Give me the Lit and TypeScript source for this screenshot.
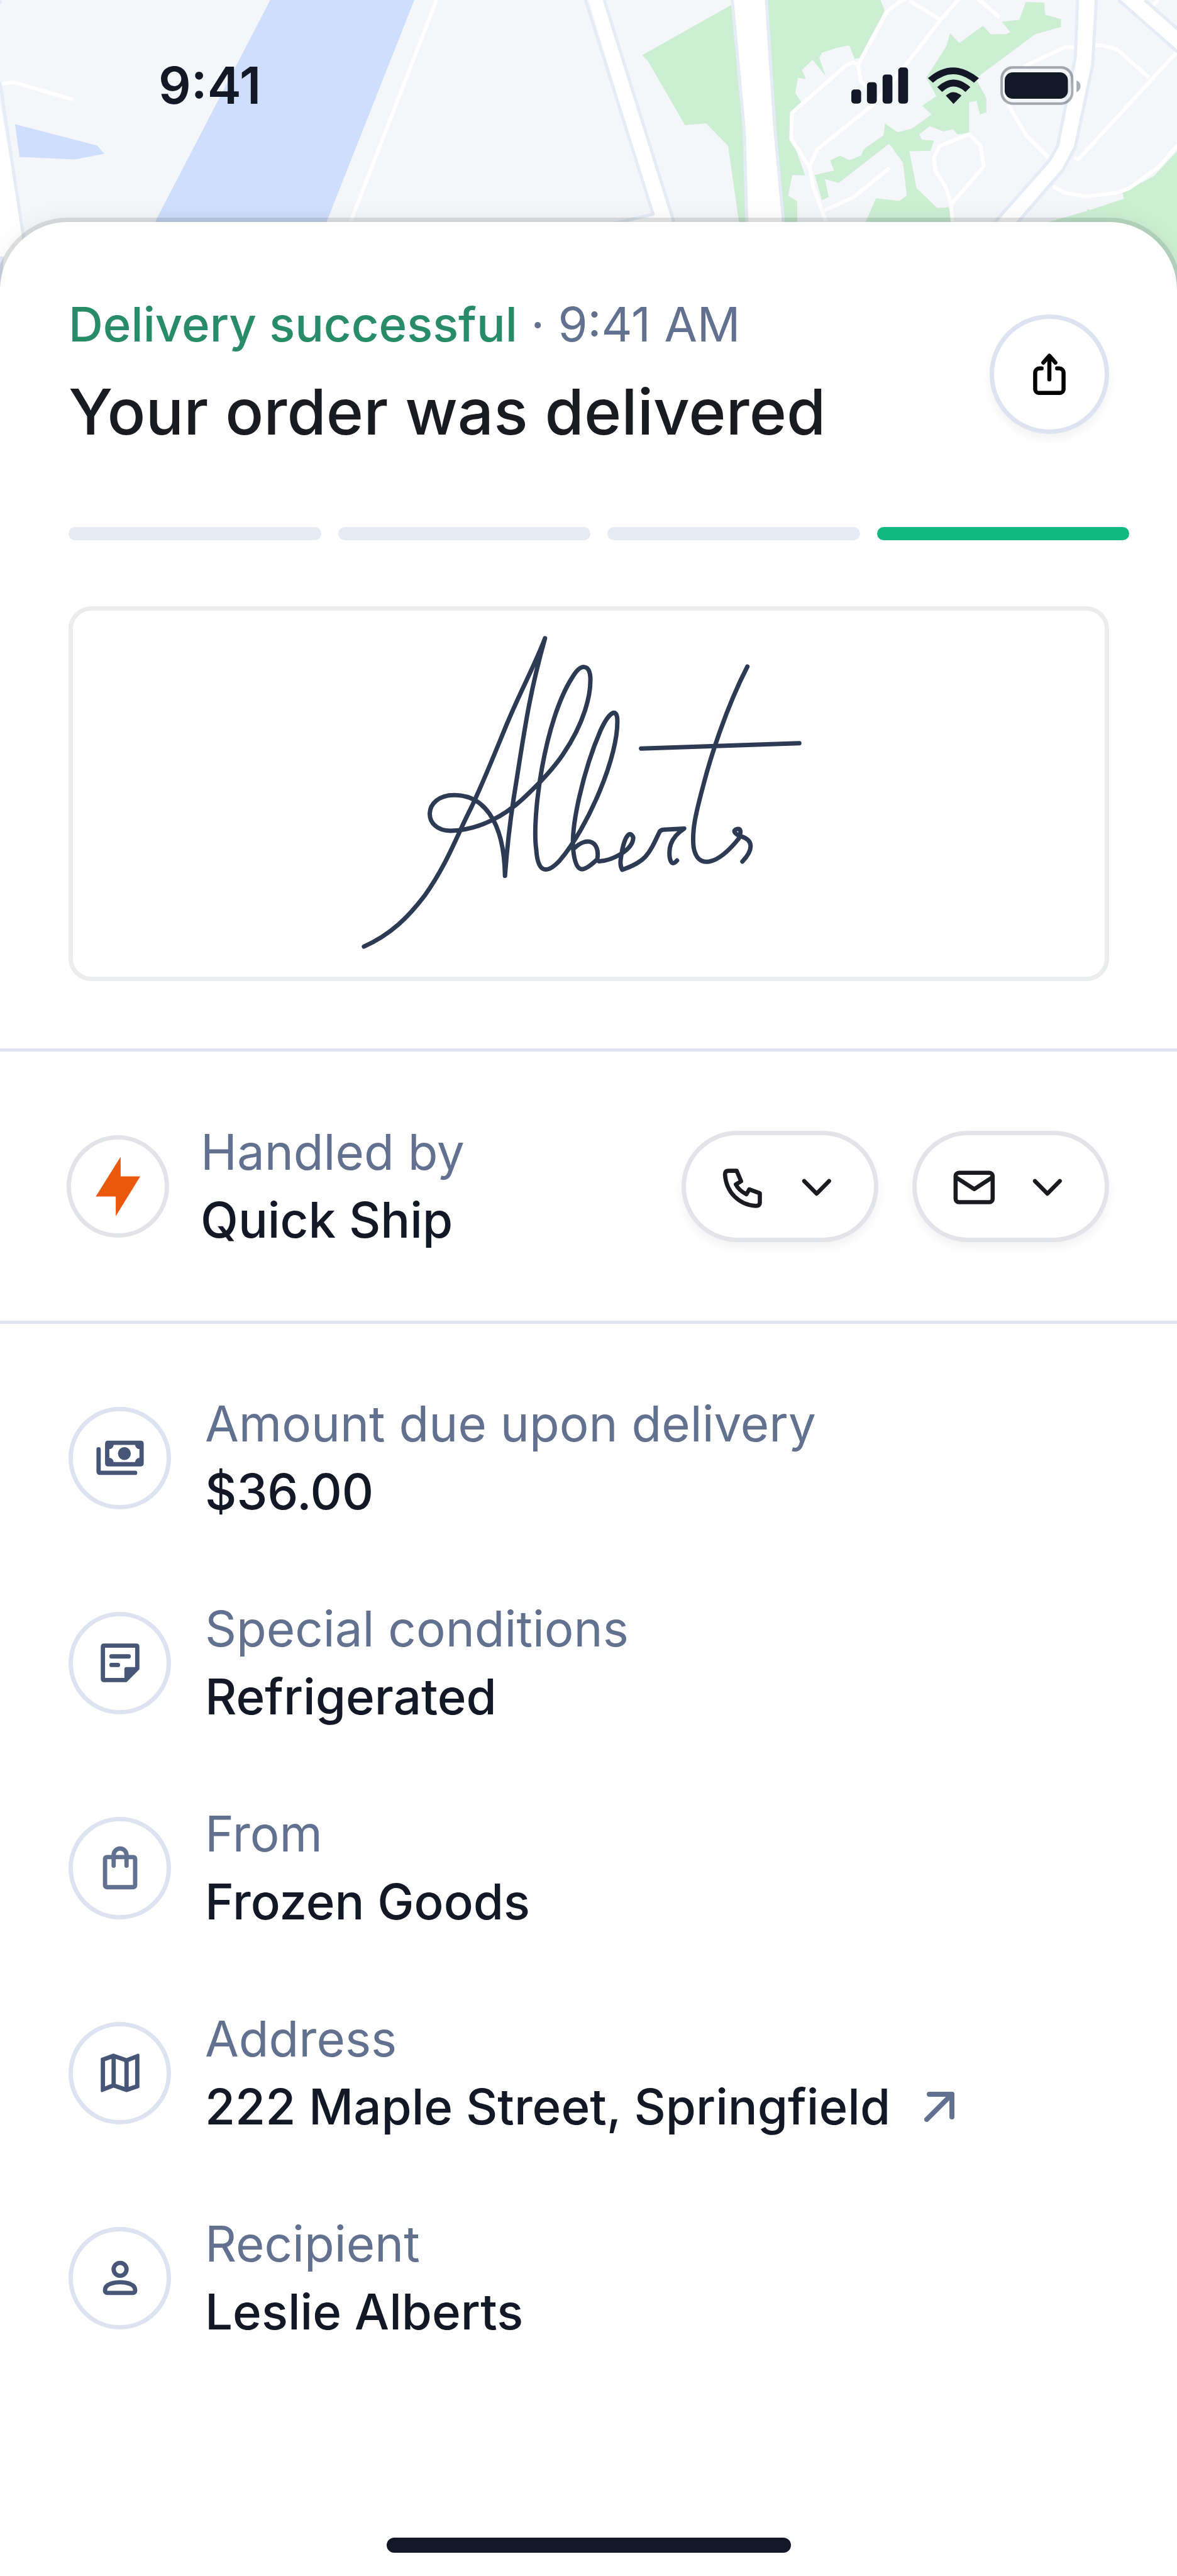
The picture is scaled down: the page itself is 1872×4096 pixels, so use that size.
import { LitElement, html, svg, css, type TemplateResult } from "lit";
import { customElement, property } from "lit/decorators.js";

/* ---------- Icons, on a 24 unit grid ---------- */

const stroked = (body: TemplateResult, width = 2) => svg`
  <g fill="none" stroke="currentColor" stroke-width=${width} stroke-linecap="round" stroke-linejoin="round">${body}</g>`;

const icons: Record<string, TemplateResult> = {
  share: stroked(
    svg`<path d="M8.4 9.3H7.4a2 2 0 0 0-2 2V19a1.7 1.7 0 0 0 1.7 1.7h9.8a1.7 1.7 0 0 0 1.7-1.7V11.3a2 2 0 0 0-2-2h-1"/>
        <path d="M12 14.4V3.5M9.2 6.6 12 3.4l2.8 3.2"/>`,
    1.9,
  ),
  phone: stroked(
    svg`<path stroke-linejoin="round" d="M3.05 6.2Q3.05 4.45 4.85 4.45H8.7L10.85 9.5 8.3 11.05Q9.8 14 13.45 15.8L14.8 13.4 19.9 15.3V20Q19.8 21.4 18 21.4C10 21 3.7 15 3.05 6.2Z"/>`,
  ),
  mail: stroked(
    svg`<rect x="3" y="5.4" width="17.9" height="14.2" rx="1.6"/><path d="M3.6 7.9 12 13.3l8.3-5.4"/>`,
  ),
  chevron: stroked(svg`<path d="M6.1 9.4 12.1 15.5 18.1 9.4"/>`),
  money: svg`<g fill="currentColor">
    <path fill-rule="evenodd" d="M6.4 4H21.6Q23 4 23 5.5V14.5Q23 16 21.6 16H6.4Q5 16 5 14.5V5.5Q5 4 6.4 4ZM9 6A2.1 2.1 0 0 1 7 8V12A2.1 2.1 0 0 1 9 14H19A2.1 2.1 0 0 1 21 12V8A2.1 2.1 0 0 1 19 6Z"/>
    <circle cx="14" cy="10" r="3"/>
    <path d="M1 8A1 1 0 0 1 3 8V18H19A1 1 0 0 1 19 20H2.6Q1 20 1 18.4Z"/></g>`,
  note: svg`<g fill="currentColor">
    <path fill-rule="evenodd" d="M4.6 3H19.4Q21 3 21 4.6V15L15 21H4.6Q3 21 3 19.4V4.6Q3 3 4.6 3ZM5 5V19H14V15Q14 14 15 14H19V5Z"/>
    <rect x="7" y="8" width="10" height="2" rx="1"/><rect x="7" y="12" width="5" height="2" rx="1"/></g>`,
  bag: stroked(
    svg`<rect x="5" y="7" width="14" height="14" rx=".8"/><path d="M9 11V6a3 3 0 0 1 6 0v5"/>`,
  ),
  map: svg`<path fill="currentColor" fill-rule="evenodd" d="M3.4 5 8.9 3 15 5.1 20.3 3.1Q21 2.9 21 3.6V18.6Q21 19 20.6 19.1L15 21 9 18.9 3.7 20.9Q3 21.1 3 20.4V5.4Q3 5.1 3.4 5ZM5 6.5V18.3L8 17.1V5.5ZM10 5.5V17.1L14 18.5V6.9ZM16 6.9V18.5L19 17.5V5.7Z"/>`,
  person: stroked(
    svg`<circle cx="12" cy="8" r="3"/><path d="M5 17.6C5 14.8 9.4 14 12 14s7 .8 7 3.6V18a1 1 0 0 1-1 1H6a1 1 0 0 1-1-1Z"/>`,
  ),
};

@customElement("ui-icon")
export class UiIcon extends LitElement {
  @property() name = "";

  static styles = css`
    :host {
      display: block;
      width: var(--icon-size, 82px);
      height: var(--icon-size, 82px);
    }
    .glyph {
      display: block;
      width: 100%;
      height: 100%;
    }
  `;

  render() {
    return html`<svg class="glyph" viewBox="0 0 24 24" aria-hidden="true">${icons[this.name]}</svg>`;
  }
}

/* ---------- Map behind the sheet ---------- */

@customElement("city-map")
export class CityMap extends LitElement {
  static styles = css`
    :host {
      display: block;
    }
    .map {
      display: block;
      width: 100%;
      background: #f4f6fa;
    }
    .water {
      fill: #cfdefd;
    }
    .shore {
      fill: #e3e9f6;
    }
    .park {
      fill: #cceed3;
    }
    .road {
      fill: #ffffff;
    }
    .edge,
    .lane {
      fill: none;
      stroke-linejoin: round;
      vector-effect: non-scaling-stroke;
    }
    .edge {
      stroke: #e6ecf5;
      stroke-width: 5px;
    }
    .lane {
      stroke: #ffffff;
      stroke-width: 6px;
    }
  `;

  render() {
    return html`
      <svg class="map" viewBox="0 0 1920 480" aria-hidden="true">
        <g transform="scale(.61224 .33333)">
          <path class="road" d="M0 500 62 1165V1440H0Z" />
          <path class="edge" d="M0 400 32 790 66 1200" />
          <path class="edge" d="M0 0V20" />
          <path class="lane" d="M4 410 36 402 195 488" />
          <path class="water" d="M40 608 259 712 278 752 200 780 52 768Z" />
          <path class="water" d="M720 0H1104L870 1086 800 1440H315L413 1086Z" />
          <path class="lane" d="M1163 0 933 1090" />
          <path class="shore" d="M0 1255H10L4 1400H0Z" />
        </g>
        <g transform="translate(960 0) scale(.61224 .33333)">
          <path class="road" d="M0 0H42L230 1100H65L172 1048Z" />
          <path class="edge" d="M-8 0 172 1048 60 1096M42 0 230 1100" />
          <path class="park" d="M380 25 143 270 158 298 257 612 313 603 372 714 402 1100H440L430 600Z" />
          <path
            class="park"
            d="M478 0H778L789 52 722 284 709 288 695 222 662 234 622 258 615 284 632 372 597 292 569 342 579 388 558 380 551 455 567 500 542 552 538 612 544 688 577 858 543 856 532 958 556 984V1100H510L498 640 484 290Z"
          />
          <path
            class="park"
            d="M1165 10 1214 12 1217 72 1259 94V132L1190 168 1040 372 1032 385 1060 480V550L1043 560 1034 494 1014 500V648L983 658 971 632 946 643 909 617 881 658 888 684 921 688 911 738 855 740 874 920 929 1018 960 1014 970 1100H735L766 970 828 983 848 958 838 796 801 703 667 895 630 877 640 964 622 980 603 856 654 835 644 784 671 762 696 784 727 760 733 730 786 662 790 604 823 647 861 630 914 560 889 518 927 470 900 380 954 225 963 162 988 210 1051 126 1072 168 1115 166 1124 156 1101 106 1148 97Z"
          />
          <path class="park" d="M1568 740 1507 860 1423 945 1427 972 1336 1028 1330 1022 1328 1032 1227 1086 1300 1440H1568Z" />
          <path class="lane" d="M845 -5 830 8 796 55 718 318 726 400 745 430M855 3 938 98M987 -5 938 98 845 318 760 510 610 730 590 810" />
          <path class="lane" d="M718 318 706 305 688 318 542 552 540 680 590 820 598 910 635 1095M1038 -5 1095 85M628 1030 706 965 802 822" />
          <path class="lane" d="M970 1090 966 1000 952 917 924 835 920 774 936 714 1014 657 1045 714 1053 815 966 1000" />
          <path class="lane" d="M1160 325 1271 230H1297M1350 222H1370L1409 243 1494 380M1570 250 1305 780 1295 772M1517 0 1505 25" />
          <path class="lane" d="M1110 450 1118 510 1165 660 1225 770M1238 912 1268 942 1327 962 1405 944 1440 922 1520 815 1570 710" />
          <path class="road" d="M383 0H474L484 290 497 640 520 1100H422L415 640Z" />
          <path class="edge" d="M383 0 415 640 422 1100M474 0 484 290 497 640 520 1100" />
          <path class="road" d="M1303 0H1353L1343 320 1297 720 1265 830 1138 1100H1076L1228 785 1250 714 1297 280Z" />
          <path class="edge" d="M1303 0 1297 280 1250 714 1228 785 1076 1100M1353 0 1343 320 1297 720 1265 830 1138 1100" />
          <path class="road" d="M1412 0H1482L1568 140V250Z" />
          <path class="edge" d="M1412 0 1570 255M1482 0 1570 142" />
        </g>
      </svg>
    `;
  }
}

/* ---------- Customer's signature ---------- */

@customElement("signature-mark")
export class SignatureMark extends LitElement {
  static styles = css`
    :host {
      display: block;
      width: 780px;
      max-width: 100%;
    }
    .ink {
      display: block;
      width: 100%;
      fill: none;
      stroke: #2d3a54;
      stroke-width: 7px;
      stroke-linecap: round;
      stroke-linejoin: round;
      overflow: visible;
    }
  `;

  render() {
    return html`
      <svg class="ink" viewBox="0 0 800 585" role="img" aria-label="Signature of Leslie Alberts">
        <g transform="scale(.5102 .3954) translate(0 -60)">
          <path
            vector-effect="non-scaling-stroke"
            d="M64 1430C150 1380 205 1310 258 1220C330 1090 360 975 405 862C440 770 480 640 520 515C565 375 610 270 643 158C590 400 575 560 545 800C530 920 520 1050 515 1138C512 900 440 805 353 805C250 805 250 955 343 952C430 950 515 890 575 817C620 763 665 705 700 638C770 505 790 390 788 320C785 270 760 255 730 320C640 500 600 900 615 1030C620 1130 650 1130 690 1075C780 940 880 640 874 490C872 450 850 455 820 540C770 690 720 940 735 1050C745 1130 765 1125 810 1070C820 1000 780 970 736 1025"
          />
          <path
            vector-effect="non-scaling-stroke"
            d="M816 1078C860 1075 925 1030 925 980C915 950 900 970 890 1030C885 1070 880 1090 890 1113C965 1080 975 1050 1008 960Q1012 948 1022 948L1088 943C1040 985 1038 1030 1042 1065C1047 1092 1055 1090 1065 1075"
          />
          <path
            vector-effect="non-scaling-stroke"
            d="M1290 275C1220 450 1170 660 1150 760C1125 880 1112 950 1118 1020C1130 1110 1190 1100 1262 985C1272 955 1268 943 1258 945C1240 950 1250 965 1268 975C1310 990 1310 1030 1274 1079"
          />
          <path vector-effect="non-scaling-stroke" d="M950 613 1456 591" />
        </g>
      </svg>
    `;
  }
}

/* ---------- Page ---------- */

interface Detail {
  icon: string;
  label: string;
  value: string;
  light?: boolean;
  link?: boolean;
}

const details: Detail[] = [
  { icon: "money", label: "Amount due upon delivery", value: "$36.00" },
  { icon: "note", label: "Special conditions", value: "Refrigerated" },
  { icon: "bag", label: "From", value: "Frozen Goods", light: true },
  { icon: "map", label: "Address", value: "222 Maple Street, Springfield", link: true },
  { icon: "person", label: "Recipient", value: "Leslie Alberts" },
];

const contacts = [
  { icon: "phone", label: "Call the courier" },
  { icon: "mail", label: "Message the courier" },
];

const steps = [false, false, false, true];

@customElement("app-root")
export class AppRoot extends LitElement {
  static styles = css`
    :host {
      display: flex;
      flex-direction: column;
      min-height: 100vh;
      background: #ffffff;
      color: #121826;
      font-family: Inter, "Liberation Sans", sans-serif;
      font-size: 78px;
      line-height: 108px;
    }
    * {
      box-sizing: border-box;
    }
    h1,
    p,
    dl,
    dt,
    dd {
      margin: 0;
      font: inherit;
    }
    button {
      font: inherit;
      color: inherit;
      background: #ffffff;
      cursor: pointer;
    }

    .hero {
      display: grid;
    }
    .hero > * {
      grid-area: 1 / 1;
      min-width: 0;
    }
    .status {
      display: flex;
      align-items: center;
      justify-content: space-between;
      align-self: start;
      height: 272px;
      padding: 0 153px 0 252px;
      font-size: 81px;
      font-weight: 600;
    }
    .indicators {
      display: block;
      width: 365px;
      height: 62px;
    }

    .sheet {
      position: relative;
      display: flex;
      flex-direction: column;
      flex: 1;
      margin-top: -115px;
      border-radius: 108px 108px 0 0;
      background: #ffffff;
      box-shadow:
        0 0 0 7px rgba(20, 30, 30, 0.12),
        0 0 40px rgba(20, 30, 30, 0.08);
    }

    .header {
      display: flex;
      align-items: center;
      justify-content: space-between;
      padding: 108px 108px 0 109px;
    }
    .headline {
      display: grid;
      gap: 10px;
    }
    .state {
      color: #62718f;
      font-size: 76px;
    }
    .ok {
      color: #288c68;
      font-weight: 500;
    }
    .title {
      color: #191b21;
      font-size: 101px;
      font-weight: 500;
      line-height: 150px;
    }
    .share {
      display: grid;
      place-items: center;
      width: 190px;
      height: 190px;
      padding: 0;
      border: 7px solid #dde3f0;
      border-radius: 50%;
      color: #000000;
      box-shadow: 0 8px 14px rgba(0, 0, 0, 0.05);
    }

    .progress {
      display: grid;
      grid-template-columns: repeat(4, 1fr);
      gap: 27px;
      margin: 109px 76px 0 109px;
    }
    .step {
      height: 21px;
      border-radius: 11px;
      background: #e6eaf4;
    }
    .step.current {
      background: #11b981;
    }

    .signature {
      display: grid;
      justify-items: center;
      margin: 105px 108px 107px 109px;
      padding: 6px 0;
      border: 7px solid #ebeced;
      border-radius: 36px;
    }

    .courier {
      display: flex;
      align-items: center;
      padding: 106px 108px 106px 106px;
      border: 0 solid #dde3f0;
      border-width: 5px 0;
    }
    .badge {
      display: grid;
      flex: none;
      place-items: center;
      width: 163px;
      height: 163px;
      border: 7px solid #dde3f0;
      border-radius: 50%;
      color: #475676;
    }
    .badge.brand {
      border-color: #e3e4e9;
    }
    .badge.light {
      color: #62718f;
    }
    .bolt {
      display: block;
      width: 149px;
      height: 149px;
    }
    .pair {
      flex: 1;
      margin-left: 50px;
    }
    .label {
      color: #62718f;
    }
    .value {
      display: flex;
      align-items: center;
      gap: 54px;
      font-weight: 500;
    }

    .contacts {
      display: flex;
      gap: 54px;
    }
    .contact {
      --icon-size: 79px;
      display: flex;
      align-items: center;
      gap: 37px;
      height: 177px;
      padding: 0 52px;
      border: 7px solid #e3e4e9;
      border-radius: 89px;
      color: #191b21;
      box-shadow: 0 8px 14px rgba(0, 0, 0, 0.05);
    }

    .details {
      display: grid;
      gap: 110px;
      padding: 105px 108px 100px 109px;
    }
    .detail {
      display: flex;
      align-items: center;
    }
    .detail .pair {
      margin-left: 54px;
    }
    .open {
      color: #62718f;
    }
    .arrow {
      display: block;
      width: 48px;
      height: 48px;
    }

    .home {
      align-self: center;
      width: 643px;
      height: 24px;
      margin: auto 0 37px;
      border-radius: 12px;
      background: #121826;
    }
  `;

  private statusBar() {
    return html`
      <div class="status">
        <time>9:41</time>
        <svg class="indicators" viewBox="0 0 374 63" role="img" aria-label="Signal, Wi-Fi and battery">
          <g fill="#121826">
            <rect x="0" y="38" width="16" height="23" rx="5" />
            <rect x="25.5" y="26" width="16" height="35" rx="5" />
            <rect x="51" y="13.5" width="16" height="47.5" rx="5" />
            <rect x="76.5" y="2" width="16" height="59" rx="5" />
            <path d="M125 19.5Q165 -15.5 208 19.5L200 27Q165 -1 133 27Z" />
            <path d="M140 34Q166 9.5 194 34L186 42Q166 24 148 42Z" />
            <path d="M154 48Q166 36.5 179.5 48L166.5 61.5Z" />
            <rect x="250" y="10" width="103" height="43" rx="13" />
          </g>
          <g fill="#121826" fill-opacity=".36">
            <path
              fill-rule="evenodd"
              d="M263 0H342A20 20 0 0 1 362 20V43A20 20 0 0 1 342 63H263A20 20 0 0 1 243 43V20A20 20 0 0 1 263 0ZM264 4A17 17 0 0 0 247 21V42A17 17 0 0 0 264 59H341A17 17 0 0 0 358 42V21A17 17 0 0 0 341 4Z"
            />
            <path d="M367 23Q373.5 26 373.5 32.5T367 42.5Z" />
          </g>
        </svg>
      </div>
    `;
  }

  private detailRow(d: Detail) {
    return html`
      <div class="detail">
        <div class="badge ${d.light ? "light" : ""}"><ui-icon name=${d.icon}></ui-icon></div>
        <dl class="pair">
          <dt class="label">${d.label}</dt>
          <dd class="value">
            ${d.value}
            ${d.link
              ? html`<a class="open" href="#map" aria-label="Open address in maps">
                  <svg class="arrow" viewBox="0 0 48 48" aria-hidden="true">
                    <path
                      d="M4 44 44 4M8 4H44V40"
                      fill="none"
                      stroke="currentColor"
                      stroke-width="8"
                      stroke-linecap="round"
                      stroke-linejoin="round"
                    />
                  </svg>
                </a>`
              : null}
          </dd>
        </dl>
      </div>
    `;
  }

  render() {
    return html`
      <div class="hero">
        <city-map></city-map>
        ${this.statusBar()}
      </div>
      <main class="sheet">
        <header class="header">
          <div class="headline">
            <p class="state"><span class="ok">Delivery successful</span> · 9:41 AM</p>
            <h1 class="title">Your order was delivered</h1>
          </div>
          <button class="share" type="button" aria-label="Share"><ui-icon name="share"></ui-icon></button>
        </header>
        <div class="progress" role="img" aria-label="Step 4 of 4">
          ${steps.map((on) => html`<div class="step ${on ? "current" : ""}"></div>`)}
        </div>
        <div class="signature"><signature-mark></signature-mark></div>
        <section class="courier">
          <div class="badge brand">
            <svg class="bolt" viewBox="7 7 153 153" aria-hidden="true">
              <path fill="#ea580c" d="M88 35V67H120L80 132V100H47.5Z" />
            </svg>
          </div>
          <dl class="pair">
            <dt class="label">Handled by</dt>
            <dd class="value">Quick Ship</dd>
          </dl>
          <div class="contacts">
            ${contacts.map(
              (c) => html`<button class="contact" type="button" aria-label=${c.label}>
                <ui-icon name=${c.icon}></ui-icon><ui-icon name="chevron"></ui-icon>
              </button>`,
            )}
          </div>
        </section>
        <section class="details">${details.map((d) => this.detailRow(d))}</section>
        <div class="home"></div>
      </main>
    `;
  }
}
